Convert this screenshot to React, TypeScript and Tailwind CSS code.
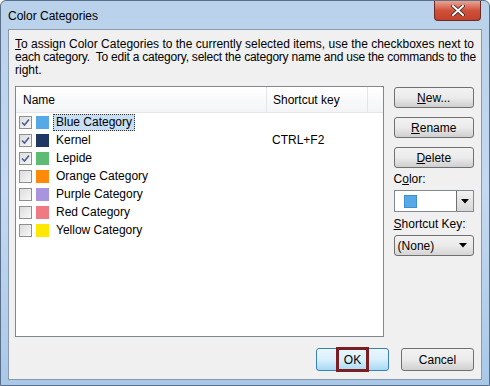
import React from 'react'

const font = { fontFamily: '"Liberation Sans", Arial, sans-serif' }

const cats = [
  { name: 'Blue Category', color: '#56a8e6', checked: true, key: '', selected: true },
  { name: 'Kernel', color: '#1f3864', checked: true, key: 'CTRL+F2' },
  { name: 'Lepide', color: '#5cbc74', checked: true, key: '' },
  { name: 'Orange Category', color: '#ff8a0a', checked: false, key: '' },
  { name: 'Purple Category', color: '#a995df', checked: false, key: '' },
  { name: 'Red Category', color: '#f07a84', checked: false, key: '' },
  { name: 'Yellow Category', color: '#ffe800', checked: false, key: '' },
]

function Check({ on }: { on: boolean }) {
  return (
    <div className="w-[13px] h-[13px] border border-[#8e8f8f] bg-gradient-to-br from-[#dcdcdc] to-[#f8f8f8] flex items-center justify-center">
      {on && (
        <svg width="9" height="9" viewBox="0 0 9 9">
          <path d="M1 4.5 L3.5 7 L8 1.5" stroke="#4a5f97" strokeWidth="1.6" fill="none" />
        </svg>
      )}
    </div>
  )
}

function Btn({ children, className = '' }: { children: React.ReactNode; className?: string }) {
  return (
    <div
      className={`h-[21px] rounded-[3px] border border-[#707070] bg-gradient-to-b from-[#f2f2f2] via-[#ebebeb] to-[#cfcfcf] flex items-center justify-center text-[12px] text-black ${className}`}
    >
      {children}
    </div>
  )
}

function Arrow() {
  return (
    <svg width="8" height="5" viewBox="0 0 8 5">
      <path d="M0 0 H8 L4 4.5 Z" fill="#000" />
    </svg>
  )
}

export default function App() {
  return (
    <div
      style={font}
      className="w-[490px] h-[386px] bg-gradient-to-b from-[#b9d1ea] via-[#c4d9ef] to-[#a9c8e8] flex flex-col px-[7px] pb-[5px] border border-[#5a6f89] rounded-t-[6px] overflow-hidden"
    >
      <div className="h-[28px] flex items-start justify-between shrink-0">
        <div className="text-[12px] text-black pt-[6px]">Color Categories</div>
        <div className="w-[47px] h-[20px] mr-[1px] rounded-b-[4px] border border-[#6b2b24] border-t-0 bg-gradient-to-b from-[#e8a493] via-[#d0513b] to-[#c2412c] flex items-center justify-center">
          <svg width="14" height="11" viewBox="0 0 14 11">
            <path d="M2 1 L12 10 M12 1 L2 10" stroke="#3a2020" strokeWidth="3.6" strokeLinecap="square" />
            <path d="M2 1 L12 10 M12 1 L2 10" stroke="#fff" strokeWidth="2" strokeLinecap="square" />
          </svg>
        </div>
      </div>
      <div className="flex-1 bg-[#f0f0f0] border border-[#8a9aaa] flex flex-col pl-[6px] pr-[7px] pt-[8px] text-black">
        <p className="text-[12px] leading-[13px] whitespace-nowrap">
          <span className="underline">T</span>o assign Color Categories to the currently selected items, use the checkboxes next to
          <br />
          <span className="tracking-[-0.22px]">
            each category.&nbsp; To edit a category, select the category name and use the commands to the
          </span>
          <br />
          right.
        </p>
        <div className="flex mt-[9px] gap-[10px]">
          <div className="w-[371px] h-[251px] bg-white border border-[#828790] flex flex-col">
            <div className="h-[26px] flex text-[12px] bg-gradient-to-b from-white to-[#f3f4f6] border-b border-[#e5e5e5]">
              <div className="w-[251px] pl-[7px] flex items-center border-r border-[#e3e5e8]">Name</div>
              <div className="w-[101px] pl-[6px] flex items-center border-r border-[#e3e5e8]">Shortcut key</div>
              <div className="flex-1" />
            </div>
            <div className="flex flex-col">
              {cats.map((c) => (
                <div key={c.name} className="h-[18px] flex items-center text-[12px]">
                  <div className="pl-[3px]">
                    <Check on={c.checked} />
                  </div>
                  <div className="w-[13px] h-[13px] ml-[4px]" style={{ background: c.color }} />
                  <div className="w-[219px] pl-[4px] flex">
                    <span
                      className={
                        c.selected
                          ? 'h-[17px] flex items-center px-[2px] bg-[#c6dff5] border border-dotted border-[#333]'
                          : 'px-[3px]'
                      }
                    >
                      {c.name}
                    </span>
                  </div>
                  <div className="pl-[4px]">{c.key}</div>
                </div>
              ))}
            </div>
          </div>
          <div className="w-[81px] flex flex-col">
            <Btn className="mt-[1px]">
              <span><span className="underline">N</span>ew...</span>
            </Btn>
            <Btn className="mt-[9px]">
              <span><span className="underline">R</span>ename</span>
            </Btn>
            <Btn className="mt-[9px]">
              <span><span className="underline">D</span>elete</span>
            </Btn>
            <div className="text-[12px] mt-[4px] leading-[15px]">
              C<span className="underline">o</span>lor:
            </div>
            <div className="mt-[3px] h-[22px] border border-[#828790] bg-white flex">
              <div className="flex-1 flex items-center pl-[9px]">
                <div className="w-[13px] h-[13px] bg-[#56a8e6] border border-[#3d8fd0]" />
              </div>
              <div className="w-[17px] border-l border-[#707070] bg-gradient-to-b from-[#f2f2f2] to-[#d8d8d8] flex items-center justify-center">
                <Arrow />
              </div>
            </div>
            <div className="text-[12px] mt-[5px] leading-[15px]">
              <span className="underline">S</span>hortcut Key:
            </div>
            <div className="mt-[3px] h-[21px] rounded-[3px] border border-[#707070] bg-gradient-to-b from-[#f2f2f2] via-[#ebebeb] to-[#d5d5d5] flex items-center justify-between pl-[3px] pr-[6px] text-[12px]">
              <span>(None)</span>
              <Arrow />
            </div>
          </div>
        </div>
        <div className="flex justify-end gap-[12px] mt-[11px]">
          <div className="w-[73px] h-[23px] rounded-[3px] border border-[#3c7fb1] bg-gradient-to-b from-[#eaf6fd] via-[#d9f0fc] to-[#a7d9f5] flex items-center justify-center">
            <div className="w-[33px] h-[25px] border-[3px] border-[#7a1e24] flex items-center justify-center text-[12px]">
              OK
            </div>
          </div>
          <Btn className="w-[73px] h-[23px]">Cancel</Btn>
        </div>
      </div>
    </div>
  )
}
